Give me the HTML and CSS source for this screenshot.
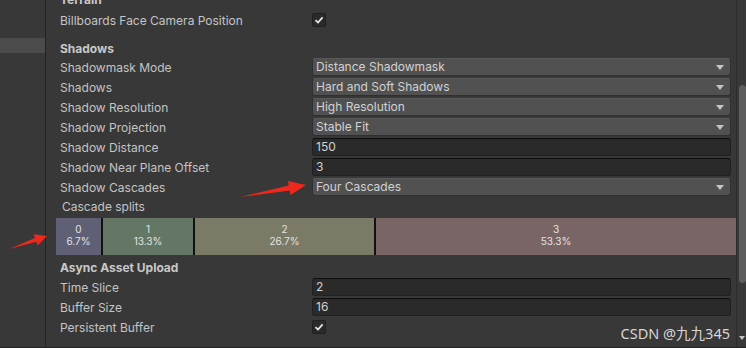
FILE: index.html
```html
<html lang="en">
<head>
    <meta charset="UTF-8">
    <title>Quality Settings</title>
    <link rel="stylesheet" href="styles.css">
</head>
<body>
<div class="window">
    <aside class="sidebar">
        <div class="side-item selected"></div>
    </aside>

    <main class="inspector">
        <div class="content">
            <div class="header first">Terrain</div>
            <div class="row">
                <span class="label">Billboards Face Camera Position</span>
                <span class="checkbox"><svg width="10" height="10" viewBox="0 0 10 10"><path d="M1.5 5.2 L4 7.6 L8.6 2.4" fill="none" stroke="#e8e8e8" stroke-width="1.7"/></svg></span>
            </div>

            <div class="header">Shadows</div>
            <div class="row">
                <span class="label">Shadowmask Mode</span>
                <span class="dropdown">Distance Shadowmask<i class="caret"></i></span>
            </div>
            <div class="row">
                <span class="label">Shadows</span>
                <span class="dropdown">Hard and Soft Shadows<i class="caret"></i></span>
            </div>
            <div class="row">
                <span class="label">Shadow Resolution</span>
                <span class="dropdown">High Resolution<i class="caret"></i></span>
            </div>
            <div class="row">
                <span class="label">Shadow Projection</span>
                <span class="dropdown">Stable Fit<i class="caret"></i></span>
            </div>
            <div class="row">
                <span class="label">Shadow Distance</span>
                <span class="textfield">150</span>
            </div>
            <div class="row">
                <span class="label">Shadow Near Plane Offset</span>
                <span class="textfield">3</span>
            </div>
            <div class="row">
                <span class="label">Shadow Cascades</span>
                <span class="dropdown">Four Cascades<i class="caret"></i></span>
            </div>
            <div class="subhead">Cascade splits</div>
            <div class="cascades">
                <div class="split split-0" style="width: 47px">0<br>6.7%</div>
                <div class="split split-1" style="width: 92px">1<br>13.3%</div>
                <div class="split split-2" style="width: 181px">2<br>26.7%</div>
                <div class="split split-3">3<br>53.3%</div>
            </div>

            <div class="header">Async Asset Upload</div>
            <div class="row">
                <span class="label">Time Slice</span>
                <span class="textfield">2</span>
            </div>
            <div class="row">
                <span class="label">Buffer Size</span>
                <span class="textfield">16</span>
            </div>
            <div class="row">
                <span class="label">Persistent Buffer</span>
                <span class="checkbox"><svg width="10" height="10" viewBox="0 0 10 10"><path d="M1.5 5.2 L4 7.6 L8.6 2.4" fill="none" stroke="#e8e8e8" stroke-width="1.7"/></svg></span>
            </div>
        </div>
        <div class="watermark">CSDN @九九345</div>
    </main>

    <div class="scrollbar">
        <div class="thumb"></div>
        <i class="scroll-down"></i>
    </div>

    <!-- red annotation arrows -->
    <svg class="annotations" width="746" height="348" viewBox="0 0 746 348">
        <polygon points="240,197 288.8,185.5 288,181.1 306,185 290.5,194.9 289.7,190.5" fill="#f0281c"/>
        <polygon points="9,249 35,238 33.6,234.2 47,236 37.6,245.6 36.3,241.8" fill="#f0281c"/>
    </svg>
</div>
</body>
</html>
```

FILE: styles.css
```css
body {
    margin: 0;
    background-color: #383838;
    font-family: Inter, "Noto Sans", sans-serif;
    font-size: 12px;
    color: #c4c4c4;
}
.window {
    position: relative;
    width: 746px;
    height: 348px;
    display: flex;
    overflow: hidden;
    border-bottom: 1px solid #232323;
    box-sizing: border-box;
}
.sidebar {
    width: 45px;
    border-right: 1px solid #232323;
    padding-top: 38px;
    flex-shrink: 0;
}
.side-item {
    height: 15px;
}
.side-item.selected {
    background-color: #4b4b4b;
}
.inspector {
    position: relative;
    width: 690px;
    flex-shrink: 0;
}
.content {
    margin-top: -8px;
    padding: 0 5px 0 14px;
}
.header {
    height: 19px;
    line-height: 19px;
    font-weight: bold;
    color: #c8c8c8;
}
.header.first {
    height: 18px;
    line-height: 16px;
}
.row {
    display: grid;
    grid-template-columns: 252px 1fr;
    align-items: center;
    height: 20px;
}
.row + .header {
    margin-top: 9px;
    height: 18px;
    line-height: 20px;
}
.label {
    white-space: nowrap;
}
.dropdown,
.textfield {
    position: relative;
    height: 16px;
    line-height: 16px;
    padding-left: 3px;
    border-radius: 3px;
    color: #d2d2d2;
}
.dropdown {
    background-color: #515151;
    border: 1px solid #303030;
    border-top-color: #595959;
}
.textfield {
    background-color: #2a2a2a;
    border: 1px solid #212121;
    border-top-color: #0f0f0f;
}
.caret {
    position: absolute;
    right: 6px;
    top: 6px;
    width: 0;
    height: 0;
    border-left: 4px solid transparent;
    border-right: 4px solid transparent;
    border-top: 5px solid #c4c4c4;
}
.checkbox {
    width: 12px;
    height: 12px;
    background-color: #2a2a2a;
    border: 1px solid #202020;
    border-radius: 2px;
    display: flex;
    align-items: center;
    justify-content: center;
}
.subhead {
    height: 19px;
    line-height: 19px;
    padding-left: 2px;
}
.cascades {
    display: flex;
    height: 37px;
    margin: 2px -5px 3px -4px;
}
.split {
    font-size: 10px;
    line-height: 12px;
    color: #e2e2e2;
    text-align: center;
    padding-top: 5px;
    box-sizing: border-box;
    border-right: 2px solid #111;
    flex-shrink: 0;
}
.split-0 {
    background-color: #5f6075;
}
.split-1 {
    background-color: #647764;
}
.split-2 {
    background-color: #7a7a66;
}
.split-3 {
    background-color: #7a6566;
    flex: 1;
    border-right: none;
}
.watermark {
    position: absolute;
    right: 6px;
    bottom: 4px;
    font-family: "Noto Sans", "Noto Sans CJK SC", sans-serif;
    font-size: 14.5px;
    color: #d6d6d6;
}
.scrollbar {
    position: relative;
    width: 10px;
    background-color: #383838;
    border-left: 1px solid #2c2c2c;
}
.thumb {
    position: absolute;
    left: 2px;
    top: 85px;
    width: 7px;
    height: 198px;
    background-color: #5d5d5d;
    border-radius: 4px;
}
.scroll-down {
    position: absolute;
    left: 2px;
    bottom: 7px;
    width: 0;
    height: 0;
    border-left: 3px solid transparent;
    border-right: 3px solid transparent;
    border-top: 4px solid #c4c4c4;
}
.annotations {
    position: absolute;
    left: 0;
    top: 0;
    pointer-events: none;
}
```
